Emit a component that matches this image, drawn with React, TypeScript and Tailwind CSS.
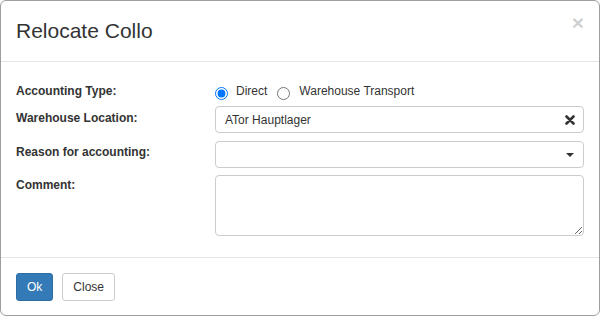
import React from "react";

const ClearIcon = () => (
  <svg width="10" height="10" viewBox="0 0 10 10" className="shrink-0">
    <path d="M1.5 1.5 L8.5 8.5 M8.5 1.5 L1.5 8.5" stroke="#333" strokeWidth="2.6" strokeLinecap="round" />
  </svg>
);

const Caret = () => (
  <svg width="8" height="4" viewBox="0 0 8 4" className="shrink-0">
    <path d="M0 0 H8 L4 4 Z" fill="#333" />
  </svg>
);

const Row = ({ label, pt = "pt-[3px]", children }: { label: string; pt?: string; children: React.ReactNode }) => (
  <div className="flex items-start">
    <div className={`w-[199px] shrink-0 font-bold leading-[17px] ${pt}`}>{label}</div>
    <div className="flex-1 min-w-0">{children}</div>
  </div>
);

export default function App() {
  return (
    <div
      className="w-[600px] h-[317px] bg-white text-[12px] text-[#333]"
      style={{ fontFamily: '"Liberation Sans", Arial, sans-serif' }}
    >
      <div className="h-[316px] border border-[#9e9e9e] rounded-[6px] bg-white flex flex-col">
        <div className="flex items-start justify-between pl-[15px] pr-[15px] pt-[17px] h-[61px] border-b border-[#e5e5e5]">
          <h4 className="text-[21px] leading-[26px] font-normal">Relocate Collo</h4>
          <span className="text-[21px] leading-[21px] font-bold text-black/20 -mt-[6px]">×</span>
        </div>

        <div className="flex-1 px-[15px] pt-[21px]">
          <Row label="Accounting Type:" pt="pt-0">
            <div className="flex items-start leading-[17px] h-[16px]">
              <input type="radio" name="type" defaultChecked className="w-[13px] h-[13px] mt-[4px] m-0" />
              <span className="ml-[8px]">Direct</span>
              <input type="radio" name="type" className="w-[13px] h-[13px] mt-[4px] ml-[10px]" />
              <span className="ml-[9px]">Warehouse Transport</span>
            </div>
          </Row>
          <div className="mt-[6px]">
            <Row label="Warehouse Location:" pt="pt-[4px]">
              <div className="h-[27px] border border-[#ccc] rounded-[4px] flex items-center pl-[9px] pr-[8px]">
                <span className="flex-1">ATor Hauptlager</span>
                <ClearIcon />
              </div>
            </Row>
          </div>
          <div className="mt-[8px]">
            <Row label="Reason for accounting:">
              <div className="h-[27px] border border-[#ccc] rounded-[4px] flex items-center justify-end pr-[9px]">
                <Caret />
              </div>
            </Row>
          </div>
          <div className="mt-[7px]">
            <Row label="Comment:" pt="pt-[2px]">
              <textarea className="block w-full h-[61px] border border-[#ccc] rounded-[4px] px-[9px] py-[4px] outline-none" />
            </Row>
          </div>
        </div>

        <div className="h-[58px] border-t border-[#e5e5e5] px-[15px] pt-[15px] flex items-start gap-[9px]">
          <button className="h-[28px] px-[10px] rounded-[3px] bg-[#337ab7] border border-[#2e6da4] text-white">Ok</button>
          <button className="h-[28px] px-[10px] rounded-[3px] bg-white border border-[#ccc] text-[#333]">Close</button>
        </div>
      </div>
    </div>
  );
}
